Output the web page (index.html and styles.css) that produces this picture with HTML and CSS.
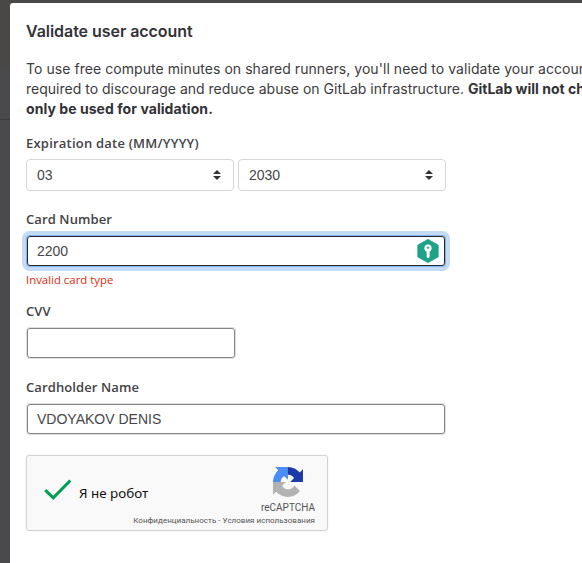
FILE: index.html
```html
<!DOCTYPE html>
<html lang="en">
<head>
<meta charset="utf-8">
<title>Validate user account</title>
<link rel="stylesheet" href="styles.css">
</head>
<body>
<main class="modal">
  <h1 class="title">Validate user account</h1>
  <p class="intro">
    <span class="line line-1">To use free compute minutes on shared runners, you'll need to validate your account</span>
    <span class="line line-2">required to discourage and reduce abuse on GitLab infrastructure. <b>GitLab will not charge</b></span>
    <b class="line line-3">only be used for validation.</b>
  </p>
  <form class="form">
    <div class="label label-date">Expiration date (MM/YYYY)</div>
    <div class="selects">
      <div class="select"><span>03</span><svg width="8" height="10" viewBox="0 0 8 10"><path d="M0 4L4 0l4 4zM0 6h8l-4 4z" fill="#333238"/></svg></div>
      <div class="select"><span>2030</span><svg width="8" height="10" viewBox="0 0 8 10"><path d="M0 4L4 0l4 4zM0 6h8l-4 4z" fill="#333238"/></svg></div>
    </div>
    <div class="label label-card">Card Number</div>
    <div class="input focused"><span>2200</span>
      <svg class="key" width="22" height="24" viewBox="0 0 22 24"><path d="M11 .3L21.3 6v12L11 23.7.7 18V6z" fill="#1fa287" stroke="#1fa287" stroke-width=".6" stroke-linejoin="round"/><circle cx="11" cy="9.2" r="3.6" fill="#fff"/><path d="M9.6 11h3v7l-1 1h-1l-1-1z" fill="#fff"/><path d="M11 7.5v2.6M9.7 8.8h2.6" stroke="#1fa287" stroke-width="1"/></svg>
    </div>
    <div class="error">Invalid card type</div>
    <div class="label label-cvv">CVV</div>
    <div class="input short"></div>
    <div class="label label-name">Cardholder Name</div>
    <div class="input holder"><span>VDOYAKOV DENIS</span></div>
  </form>
  <section class="captcha" lang="ru">
    <svg class="check" width="28" height="22" viewBox="0 0 28 22"><path d="M1.3 11.2l8 7.7L26.3 1.5" fill="none" stroke="#009e55" stroke-width="3"/></svg>
    <span class="robot">Я не робот</span>
    <div class="brand">
      <svg class="logo" width="30" height="30" viewBox="0 0 64 64"><path fill="#1c3aa9" d="M64 31.955l-.033-1.37V4.687l-7.16 7.16C50.948 4.674 42.033.093 32.05.093c-10.4 0-19.622 4.96-25.458 12.64l11.736 11.86a15.55 15.55 0 0 1 4.754-5.334c2.05-1.6 4.952-2.906 8.968-2.906.485 0 .86.057 1.135.163 4.976.393 9.288 3.14 11.828 7.124l-8.307 8.307L64 31.953"/><path fill="#4a8df6" d="M31.862.094l-1.37.033H4.594l7.16 7.16C4.58 13.147 0 22.06 0 32.046c0 10.4 4.96 19.622 12.64 25.458L24.5 45.768a15.55 15.55 0 0 1-5.334-4.754c-1.6-2.05-2.906-4.952-2.906-8.968 0-.485.057-.86.163-1.135.393-4.976 3.14-9.288 7.124-11.828l8.307 8.307L31.86.095"/><path fill="#b2b2b2" d="M.001 32.045l.033 1.37v25.898l7.16-7.16c5.86 7.173 14.774 11.754 24.76 11.754 10.4 0 19.622-4.96 25.458-12.64l-11.736-11.86a15.55 15.55 0 0 1-4.754 5.334c-2.05 1.6-4.952 2.906-8.968 2.906-.485 0-.86-.057-1.135-.163-4.976-.393-9.288-3.14-11.828-7.124l8.307-8.307c-10.522.04-22.4.066-27.295-.005"/></svg>
      <span class="brand-name">reCAPTCHA</span>
      <span class="terms">Конфиденциальность - Условия использования</span>
    </div>
  </section>
</main>
</body>
</html>
```
FILE: styles.css
```css
* { box-sizing: border-box; }
body {
  margin: 0;
  height: 563px;
  padding: 3px 0 0 10px;
  overflow: hidden;
  background: linear-gradient(#4a4747 0 70px, #4a4a4c 70px 119px, #3d3d3f 119px 120px, #4a4a4c 120px);
  color: #333238;
  font-family: "Noto Sans", sans-serif;
}
.modal {
  height: 560px;
  padding: 18px 0 0 16px;
  background: #fff;
  border-top-left-radius: 3px;
  overflow: hidden;
}
.title {
  margin: 0;
  font: 600 16px/21px Inter, sans-serif;
  letter-spacing: -.05px;
}
.intro {
  margin: 17px 0 0;
  color: #3c3b41;
  font: 400 14px/20px Inter, sans-serif;
}
.line { display: block; white-space: nowrap; }
.line-1 { letter-spacing: .06px; }
.line-2 { letter-spacing: .005px; }
.line-3 { letter-spacing: .06px; }
.intro b { color: #333238; font-weight: 700; }
.line-2 b { letter-spacing: 0; }
.label {
  width: max-content;
  height: 20px;
  color: #434247;
  font: 600 13px/20px "Open Sans", sans-serif;
  letter-spacing: .1px;
  white-space: nowrap;
}
.label-date { margin-top: 14px; letter-spacing: .22px; }
.selects { display: flex; gap: 4px; margin-top: 6px; }
.select {
  display: flex;
  align-items: center;
  justify-content: space-between;
  width: 208px;
  height: 32px;
  padding: 0 12px 0 10px;
  border: 1px solid #d6d6d8;
  border-radius: 4px;
  color: #47464b;
  font: 14px/20px "Liberation Sans", sans-serif;
}
.label-card { margin-top: 18px; }
.input {
  display: flex;
  align-items: center;
  justify-content: space-between;
  width: 418px;
  height: 30px;
  margin: 7px 0 0 1px;
  padding: 0 5.5px 0 9px;
  border: 1px solid #858587;
  border-radius: 3px;
  box-shadow: 0 0 0 1px #dededf;
  color: #47464b;
  font: 14px/20px "Liberation Sans", sans-serif;
}
.focused {
  border-color: #28272d;
  box-shadow: 0 0 0 1px #7eb5ef, 0 0 0 5px #c5daf4;
}
.error {
  margin-top: 4px;
  color: #dd2b0e;
  font: 11.4px/20px "Open Sans", sans-serif;
}
.label-cvv { margin-top: 11px; }
.input.short { width: 208px; }
.label-name { margin-top: 19px; }
.captcha {
  display: flex;
  width: 302px;
  height: 76px;
  margin-top: 21px;
  border: 1px solid #d3d3d3;
  border-radius: 3px;
  background: #f9f9f9;
  box-shadow: 0 0 3px #0001;
}
.check { margin: 23px 0 0 17px; flex: none; }
.robot {
  flex: none;
  width: 74px;
  margin: 27px 0 0 7px;
  color: #111;
  font: 13.4px/20px "Noto Sans", sans-serif;
  white-space: nowrap;
}
.brand {
  display: flex;
  flex: 1;
  flex-direction: column;
  align-items: flex-end;
  min-width: 0;
  padding: 11px 12px 0 0;
  color: #555;
}
.logo { flex: none; margin-right: 12px; }
.brand-name { margin-top: 5px; font: 10px/12px Roboto, sans-serif; }
.terms { margin-top: 2px; font: 8px/10px Roboto, sans-serif; letter-spacing: .03px; white-space: nowrap; }
```
